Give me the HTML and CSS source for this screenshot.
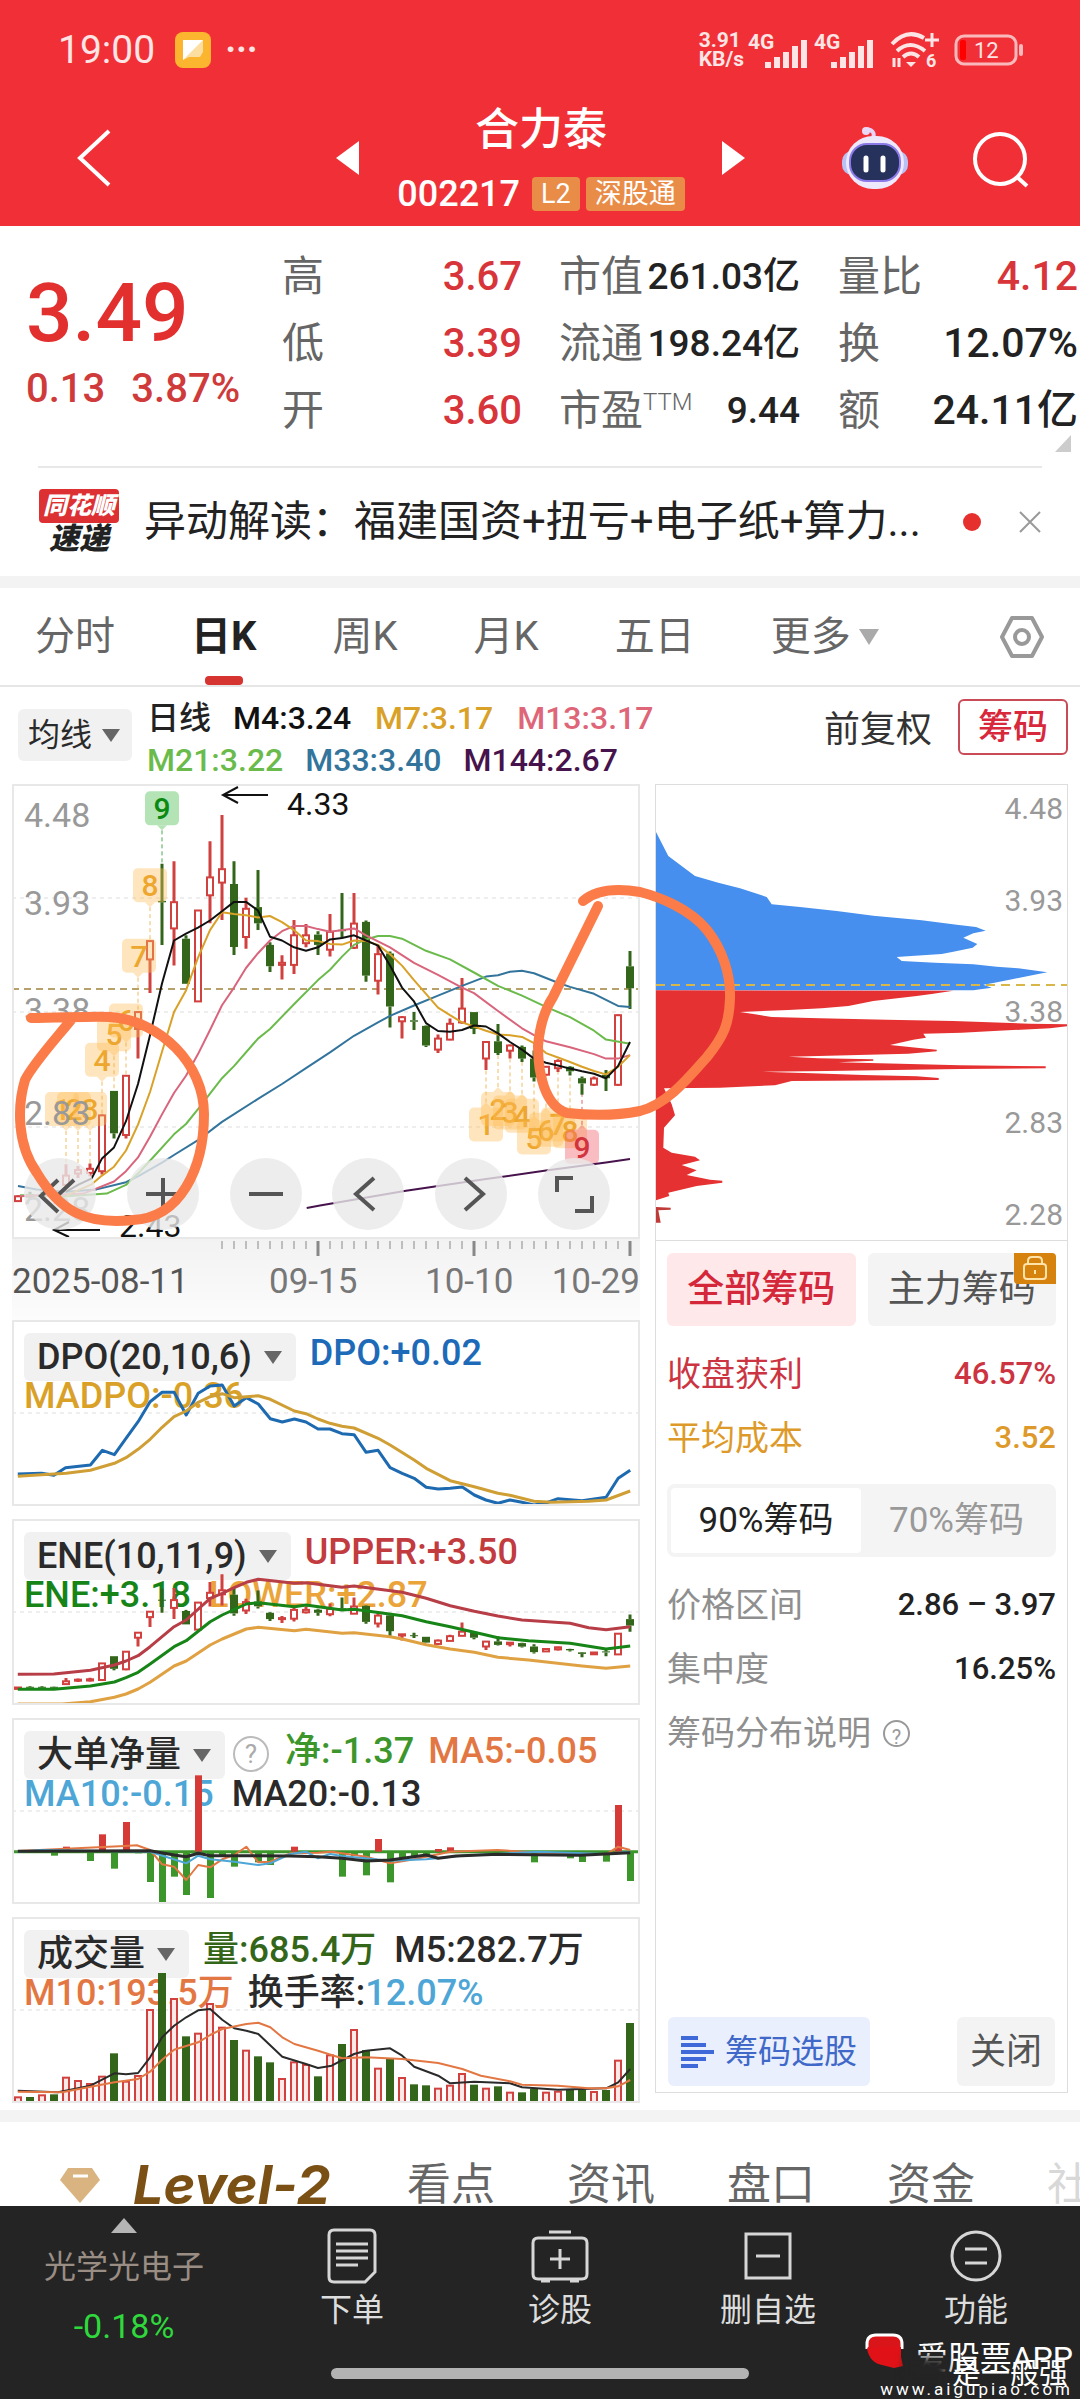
FILE: index.html
```html
<!DOCTYPE html>
<html lang="zh-CN">
<head>
<meta charset="utf-8">
<meta name="viewport" content="width=device-width">
<title>合力泰 002217</title>
<link rel="stylesheet" href="styles.css">
</head>
<body>
<header class="top">
  <div class="status">
    <span class="clock">19:00</span>
    <svg class="note" width="36" height="36" viewBox="0 0 36 36"><rect width="36" height="36" rx="8" fill="#fbb52f"/><path d="M8 8h20v12l-3 5H14L8 28z" fill="#fff" opacity=".55"/><path d="M8 8h20L8 28z" fill="#fff"/></svg>
    <span class="more">···</span>
    <span class="speed">3.91<br>KB/s</span>
    <svg width="62" height="36" viewBox="0 0 62 36" class="sig"><use href="#signal"/></svg>
    <svg width="62" height="36" viewBox="0 0 62 36" class="sig"><use href="#signal"/></svg>
    <svg class="wifi" width="50" height="38" viewBox="0 0 50 38" fill="none" stroke="#fde4e5" stroke-width="4"><path d="M2 13Q17-3 34 7M7 20q13-12 28 0M13 26q8-7 16 0"/><path d="M16 31h10l-5 5z" fill="#fde4e5" stroke="none"/><path d="M42 2v14M35 9h14M4 27v9M9 36v-9" stroke-width="3"/><text x="36" y="36" font-size="18" font-weight="700" fill="#fde4e5" stroke="none">6</text></svg>
    <svg width="72" height="32" viewBox="0 0 72 32"><rect x="2" y="2" width="60" height="28" rx="8" fill="none" stroke="#f9b9bc" stroke-width="3"/><rect x="6" y="6" width="6" height="20" rx="2" fill="#f00"/><path d="M67 12v8" stroke="#f9b9bc" stroke-width="4" stroke-linecap="round"/><text x="20" y="24" font-size="22" fill="#fde4e5">12</text></svg>
  </div>
  <nav class="titlebar">
    <button class="icon-btn back" aria-label="返回"><svg width="36" height="60" viewBox="0 0 36 60" fill="none" stroke="#fff" stroke-width="4"><path d="M33 3 4 30l29 27"/></svg></button>
    <button class="icon-btn prev" aria-label="上一只"><svg width="24" height="34" viewBox="0 0 24 34"><path d="M0 17 23 0v34z" fill="#fff"/></svg></button>
    <div class="name">
      <h1>合力泰</h1>
      <div class="code"><span>002217</span><b>L2</b><b>深股通</b></div>
    </div>
    <button class="icon-btn next" aria-label="下一只"><svg width="24" height="34" viewBox="0 0 24 34"><path d="M23 17 0 0v34z" fill="#fff"/></svg></button>
    <button class="icon-btn bot" aria-label="智能助手"><svg width="66" height="64" viewBox="0 0 66 64"><path d="M31 12q3-7-6-9" fill="none" stroke="#e6d4fa" stroke-width="4"/><circle cx="24" cy="5" r="4" fill="#e9d9f7"/><rect y="25" width="66" height="24" rx="10" fill="#b9c0f3"/><rect x="4" y="10" width="58" height="53" rx="27" fill="#eee8fd"/><rect x="8" y="18" width="50" height="37" rx="17" fill="#26315c" stroke="#8b79e8" stroke-width="2"/><path d="M24 32v12M41 32v12" stroke="#fff" stroke-width="5" stroke-linecap="round"/></svg></button>
    <button class="icon-btn search" aria-label="搜索"><svg width="58" height="58" viewBox="0 0 58 58" fill="none" stroke="#fff" stroke-width="4"><circle cx="28" cy="28" r="25"/><path d="m45 46 10 9"/></svg></button>
  </nav>
</header>

<section class="quote">
  <div class="last"><strong>3.49</strong><p><span>0.13</span><span>3.87%</span></p></div>
  <dl class="stat up"><div><dt>高</dt><dd>3.67</dd></div><div><dt>低</dt><dd>3.39</dd></div><div><dt>开</dt><dd>3.60</dd></div></dl>
  <dl class="stat cap"><div><dt>市值</dt><dd>261.03亿</dd></div><div><dt>流通</dt><dd>198.24亿</dd></div><div><dt>市盈<sup>TTM</sup></dt><dd>9.44</dd></div></dl>
  <dl class="stat turn"><div><dt>量比</dt><dd class="red">4.12</dd></div><div><dt>换</dt><dd>12.07%</dd></div><div><dt>额</dt><dd>24.11亿</dd></div></dl>
  <svg class="corner" width="16" height="17" viewBox="0 0 16 17"><path d="M16 0v17H0z" fill="#ccc"/></svg>
</section>
<section class="news">
  <div class="brand"><span>同花顺</span><em>速递</em></div>
  <a href="#news">异动解读：福建国资+扭亏+电子纸+算力...</a>
  <i class="dot"></i>
  <button class="icon-btn" aria-label="关闭提示"><svg width="24" height="24" viewBox="0 0 24 24" stroke="#999" stroke-width="2"><path d="m2 2 20 20M22 2 2 22"/></svg></button>
</section>

<nav class="periods">
  <button>分时</button><button class="on">日K</button><button>周K</button><button>月K</button><button>五日</button><button>更多<i class="caret light"></i></button>
  <button class="gear" aria-label="设置"><svg width="46" height="44" viewBox="0 0 46 44" fill="none" stroke="#999" stroke-width="4"><path d="M13 3h20l10 19-10 19H13L3 22z" stroke-linejoin="round"/><circle cx="23" cy="22" r="7"/></svg></button>
</nav>

<section class="averages">
  <button class="pick">均线<i class="caret"></i></button>
  <p><span>日线</span><span class="c-black">M4:3.24</span><span class="c-gold">M7:3.17</span><span class="c-pink">M13:3.17</span><br><span class="c-green">M21:3.22</span><span class="c-blue">M33:3.40</span><span class="c-purple">M144:2.67</span></p>
  <button class="adjust">前复权</button>
  <button class="chips-btn">筹码</button>
</section>

<main class="charts">
  <div class="left">
    <div class="kline">
      <svg id="kline" viewBox="0 0 628 455"></svg>
      <div class="tools">
        <button aria-label="最左"><svg viewBox="0 0 72 72"><path d="M34 22 17 38l17 16M50 22 33 38l17 16"/></svg></button>
        <button aria-label="放大"><svg viewBox="0 0 72 72"><path d="M36 20v33M19 36h34"/></svg></button>
        <button aria-label="缩小"><svg viewBox="0 0 72 72"><path d="M19 36h34"/></svg></button>
        <button aria-label="左移"><svg viewBox="0 0 72 72"><path d="M42 20 24 36l18 16"/></svg></button>
        <button aria-label="右移"><svg viewBox="0 0 72 72"><path d="m30 20 18 16-18 16"/></svg></button>
        <button aria-label="全屏"><svg viewBox="0 0 72 72"><path d="M19 34V20h16M54 38v15H37"/></svg></button>
      </div>
    </div>
    <div class="axis">
      <svg id="ticks" viewBox="0 0 628 18"></svg>
      <p><span>2025-08-11</span><span>09-15</span><span>10-10</span><span>10-29</span></p>
    </div>
    <div class="pane">
      <p class="legend"><button class="pick">DPO(20,10,6)<i class="caret"></i></button><span class="c-dpo">DPO:+0.02</span><br><span class="c-gold">MADPO:-0.36</span></p>
      <svg id="dpo" viewBox="0 0 628 186"></svg>
    </div>
    <div class="pane">
      <p class="legend"><button class="pick">ENE(10,11,9)<i class="caret"></i></button><span class="c-red">UPPER:+3.50</span><br><span class="c-ene">ENE:+3.18</span><span class="c-amber gap">LOWER:+2.87</span></p>
      <svg id="ene" viewBox="0 0 628 186"></svg>
    </div>
    <div class="pane">
      <p class="legend"><button class="pick">大单净量<i class="caret"></i></button><i class="help">?</i><span class="c-net">净:-1.37</span><span class="c-orange near">MA5:-0.05</span><br><span class="c-sky">MA10:-0.15</span><span class="gap">MA20:-0.13</span></p>
      <svg id="net" viewBox="0 0 628 186"></svg>
    </div>
    <div class="pane">
      <p class="legend"><button class="pick">成交量<i class="caret"></i></button><span class="c-vol">量:685.4万</span><span>M5:282.7万</span><br><span class="c-orange">M10:193.5万</span><span class="near">换手率:<span class="c-sky">12.07%</span></span></p>
      <svg id="vol" viewBox="0 0 628 186"></svg>
    </div>
  </div>

  <aside class="chips">
    <svg id="dist" viewBox="0 0 411 455"></svg>
    <div class="chips-body">
      <div class="pair"><button class="all">全部筹码</button><button class="main">主力筹码<svg class="lock" width="42" height="31" viewBox="0 0 42 31" fill="none" stroke="#ffe3a8" stroke-width="2"><path d="M0 0h38q4 0 4 4v27H4q-4 0-4-4z" fill="#d6820f" stroke="none"/><rect x="10" y="11" width="22" height="15" rx="3"/><path d="M14 11V8q0-4 4-4h6q4 0 4 4v3M21 17v4"/></svg></button></div>
      <dl>
        <div class="c-profit"><dt>收盘获利</dt><dd>46.57%</dd></div>
        <div class="c-cost"><dt>平均成本</dt><dd>3.52</dd></div>
      </dl>
      <div class="seg"><button class="on">90%筹码</button><button>70%筹码</button></div>
      <dl class="grey">
        <div><dt>价格区间</dt><dd>2.86 – 3.97</dd></div>
        <div><dt>集中度</dt><dd>16.25%</dd></div>
        <div><dt>筹码分布说明<i class="help small">?</i></dt></div>
      </dl>
    </div>
    <div class="chips-foot">
      <button class="screen"><svg width="34" height="34" viewBox="0 0 34 34" stroke="#3f68d8" stroke-width="4"><path d="M0 3h17M0 10h25M0 17h33M0 24h25M0 31h17"/></svg>筹码选股</button>
      <button class="close">关闭</button>
    </div>
  </aside>

  <svg class="ink" viewBox="0 0 1080 455" fill="none" stroke="#fb7c48" stroke-width="10" stroke-linecap="round" stroke-linejoin="round">
    <path d="M31 234C60 234 90 232 110 233C160 236 204 280 204 330C204 385 180 434 133 436C85 441 60 427 37 389C17 361 17 323 25 296C33 280 53 258 71 236"/>
    <path d="M583 117C598 104 622 105 640 108C660 113 690 125 707 146C722 165 731 190 730 215C729 240 724 252 707 273C690 292 668 320 640 327C610 333 585 331 567 329C545 322 538 290 538 262C540 240 545 225 553 213L598 122"/>
  </svg>
</main>

<nav class="topics">
  <svg width="42" height="37" viewBox="0 0 42 37"><path d="M9 1h24l8 12-20 23L1 13z" fill="#d9b480"/><path d="M14 9h15" stroke="#fff" stroke-width="3"/></svg>
  <a class="level" href="#level2">Level-2</a><a href="#views">看点</a><a href="#info">资讯</a><a href="#book">盘口</a><a href="#funds">资金</a><a class="fade" href="#community">社区</a>
</nav>

<footer class="dock">
  <button class="index"><svg width="26" height="15" viewBox="0 0 26 15"><path d="M13 0 26 15H0z" fill="#b5b5b5"/></svg><span>光学光电子</span><b>-0.18%</b></button>
  <button><svg width="50" height="56" viewBox="0 0 50 56"><path d="M7 2h36q5 0 5 5v37L38 54H7q-5 0-5-5V7q0-5 5-5zM9 16h32M9 23h32M9 30h32M9 37h22"/></svg>下单</button>
  <button><svg width="58" height="56" viewBox="0 0 58 56"><path d="M18 4h22M7 10h44q5 0 5 5v31q0 5-5 5H7q-5 0-5-5V15q0-5 5-5zM29 21v20M19 31h20M10 53h9M39 53h9"/></svg>诊股</button>
  <button><svg width="50" height="56" viewBox="0 0 50 56"><path d="M3 6h44v44H3zM13 28h24"/></svg>删自选</button>
  <button><svg width="54" height="56" viewBox="0 0 54 56"><circle cx="27" cy="28" r="24"/><path d="M16 21h22M16 35h22"/></svg>功能</button>
  <i class="home"></i>
  <div class="mark">
    <svg width="40" height="38" viewBox="0 0 40 38"><path d="M2 16V11Q2 2 11 2h17q9 0 9 9v5" fill="#d9151a" stroke="#fff" stroke-width="3"/><path d="M3 14h33v10l2 9-9 2-12-3q-12-2-15-16z" fill="#e01217"/></svg>
    <span class="app">爱股票APP</span><i class="smudge"></i><span class="who">是一般强</span><span class="site">www.aigupiao.com</span>
  </div>
</footer>

<svg width="0" height="0" class="defs"><defs><g id="signal"><text x="0" y="17" font-size="21" font-weight="700" fill="#fde4e5">4G</text><path d="M20 36v-6M29 36V25M38 36V20M47 36V14M56 36V8" stroke="#fde4e5" stroke-width="6"/></g></defs></svg>
<script src="charts.js"></script>
</body>
</html>
```

FILE: styles.css
```css
* { box-sizing: border-box; }
body {
  margin: 0;
  background: #fff;
  color: #222;
  font-family: Roboto, "Noto Sans CJK SC", sans-serif;
  font-size: 36px;
  overflow-x: hidden;
}
h1, p, dl, dd { margin: 0; }
button {
  border: 0; padding: 0; background: none; color: inherit;
  font: inherit; line-height: 1; white-space: nowrap;
}
a { color: inherit; text-decoration: none; }
svg { display: block; flex: none; }
svg text { font-family: Roboto, "Noto Sans CJK SC", sans-serif; }
.defs { position: absolute; }
.icon-btn { display: grid; place-items: center; }

/* header */
.top { background: #f03036; color: #fff; height: 226px; padding: 28px 0 0; }
.status { display: flex; align-items: center; height: 44px; padding: 0 54px 0 58px; color: #fde4e5; gap: 4px; }
.clock { font-size: 39px; }
.note { margin-left: 16px; }
.more { margin-left: 10px; font-size: 36px; font-weight: 700; margin-right: auto; }
.speed { font-size: 21px; line-height: 19px; font-weight: 700; }
.wifi { margin: 0 10px; }
.titlebar {
  display: grid; align-items: center; height: 150px;
  grid-template-columns: 112px 224fr 24px 362px 24px 96fr 66px 64px 58px 50px;
}
.back { justify-self: end; padding-top: 22px; }
.prev, .next { padding-top: 22px; }
.prev { grid-column: 3; }
.bot { grid-column: 7; padding-top: 22px; }
.search { grid-column: 9; padding-top: 26px; }
.name { text-align: center; align-self: start; padding-top: 28px; }
.name h1 { font-size: 44px; line-height: 60px; font-weight: 500; }
.code { display: flex; justify-content: center; align-items: center; gap: 6px; font-size: 36px; line-height: 56px; padding-top: 6px; }
.code span { margin-right: 6px; font-weight: 500; }
.code b { background: #e98c48; border-radius: 4px; font-size: 27px; line-height: 34px; padding: 0 9px; font-weight: 400; }

/* quote */
.quote {
  position: relative; display: grid; height: 240px; padding: 17px 2px 0 26px;
  grid-template-columns: 256px 240px 37px 241px 38px 1fr;
}
.last { color: #e2302f; }
.last strong { display: block; font-size: 82px; line-height: 92px; padding-top: 24px; font-weight: 500; }
.last p { display: flex; gap: 26px; font-size: 40px; line-height: 52px; padding-top: 4px; font-weight: 500; color: #cf3b3b; }
.stat { font-size: 40px; line-height: 67px; white-space: nowrap; }
.stat div { display: flex; justify-content: space-between; height: 67px; }
.stat dt { color: #666; font-size: 42px; }
.stat dd { font-weight: 500; }
.stat.up dd, .turn .red { color: #d8353a; }
.cap { grid-column: 4; }
.cap dd { font-size: 37px; }
.turn { grid-column: 6; }
.turn dd { font-size: 41px; }
.stat sup { font-size: 24px; line-height: 24px; font-weight: 300; }
.corner { position: absolute; right: 9px; bottom: 14px; }
.news {
  display: flex; align-items: center; height: 110px; margin: 0 38px;
  border-top: 2px solid #e8e8e8;
}
.brand { display: flex; flex-direction: column; width: 82px; align-items: center; font-style: italic; }
.brand span { background: #dc3033; color: #fff; font-size: 24px; line-height: 34px; font-weight: 900; padding: 0 4px; border-radius: 4px; width: 80px; white-space: nowrap; text-align: center; }
.brand em { font-size: 30px; line-height: 32px; font-weight: 900; }
.news a { flex: 1; margin-left: 24px; font-size: 42px; line-height: 60px; white-space: nowrap; overflow: hidden; }
.dot { width: 18px; height: 18px; border-radius: 50%; background: #e6302e; margin: 0 37px 0 20px; }

/* period tabs */
.periods {
  display: flex; align-items: center; height: 111px; padding: 0 35px;
  border-top: 12px solid #f3f3f3; border-bottom: 2px solid #e6e6e6; color: #666; font-size: 40px; gap: 76px;
}
.periods button { position: relative; height: 97px; display: flex; align-items: center; }
.periods .on { color: #222; font-weight: 700; }
.periods .on::after { content: ""; position: absolute; left: 50%; bottom: 0; width: 38px; height: 9px; margin-left: -19px; border-radius: 4px; background: #d63431; }
.periods .gear { margin-left: auto; }
.caret { width: 0; height: 0; border: 9px solid transparent; border-top: 13px solid #666; border-bottom: 0; margin-left: 12px; }
.caret.light { border-top-color: #aaa; border-left-width: 10px; border-right-width: 10px; border-top-width: 16px; margin-left: 8px; }
.pick { display: inline-flex; align-items: center; background: #f1f1f1; border-radius: 6px; color: #2a2a2a; }

/* moving averages */
.averages { display: flex; align-items: flex-start; height: 97px; padding: 12px 12px 0 18px; font-size: 32px; }
.averages .pick { height: 52px; width: 114px; padding-left: 10px; margin-top: 10px; flex: none; }
.averages .caret { margin-left: 10px; }
.averages p { flex: 1; margin-left: 15px; margin-top: -2px; line-height: 42px; white-space: nowrap; font-weight: 500; }
.averages p span { margin-right: 22px; }
.averages .c-black, .averages .c-gold { margin-right: 24px; }
.adjust { font-size: 36px; line-height: 62px; margin-right: 26px; color: #333; }
.chips-btn { width: 110px; height: 56px; border: 2px solid #c94b57; border-radius: 6px; color: #d8283c; font-weight: 500; font-size: 35px; }
.c-black { color: #111; } .c-gold { color: #d9a128; } .c-pink { color: #de6678; }
.c-green { color: #6bbb4c; } .c-blue { color: #33749c; } .c-purple { color: #47134c; }
.c-dpo { color: #1d6ab8; } .c-red { color: #c23b3f; } .c-ene { color: #178417; }
.c-amber { color: #eaa43a; } .c-net { color: #3c962b; } .c-orange { color: #e37743; }
.c-sky { color: #4da6d6; } .c-vol { color: #336619; }

/* chart columns */
.charts { position: relative; display: grid; grid-template-columns: 628fr 413fr; gap: 15px; padding: 0 12px 7px; align-items: start; }
.ink { position: absolute; top: 0; left: 0; width: 100%; pointer-events: none; }
.kline { position: relative; }
.kline, .pane { outline: 2px solid #e8e8e8; outline-offset: -2px; }
.kline > svg, .axis svg, .pane > svg { width: 100%; }
.tools { position: absolute; left: 12px; right: 30px; bottom: 9px; display: flex; justify-content: space-between; }
.tools button { width: 72px; height: 72px; border-radius: 50%; background: rgba(232, 232, 232, .8); }
.tools path { fill: none; stroke: #555; stroke-width: 4; }
.axis { height: 81px; background: linear-gradient(#f2f2f2, #fcfcfc); color: #777; font-size: 35px; }
.axis p { display: grid; grid-template-columns: 257px 156px 115px 1fr; line-height: 50px; white-space: nowrap; }
.axis p span:first-child { color: #555; }
.axis p span:last-child { text-align: right; }
.pane { display: grid; height: 186px; margin-bottom: 13px; overflow: hidden; }
.pane:last-child { margin-bottom: 0; }
.pane > * { grid-area: 1 / 1; }
.pane > svg { pointer-events: none; }
.legend { padding: 13px 0 0 12px; font-size: 36px; line-height: 36px; white-space: nowrap; font-weight: 500; color: #2a2a2a; }
.legend .pick { height: 48px; padding: 0 14px 0 13px; margin-right: 14px; margin-bottom: -3px; font-weight: 500; vertical-align: middle; }
.legend > span + span { margin-left: 18px; }
.legend > span + .near { margin-left: 14px; }
.legend br + span { margin-left: 0; }
.help {
  display: inline-grid; place-items: center; width: 36px; height: 36px; margin: 0 16px 0 -6px; vertical-align: middle;
  border: 2px solid #bbb; border-radius: 50%; color: #aaa; font-size: 26px; line-height: 30px; font-style: normal; font-weight: 400;
}
.help.small { width: 27px; height: 27px; margin: -6px 0 0 12px; font-size: 20px; border-color: #999; color: #999; }

/* chip distribution */
.chips { border: 1px solid #ddd; height: 1309px; display: flex; flex-direction: column; }
.chips > svg { width: 100%; border-bottom: 1px solid #ddd; }
.chips-body { padding: 12px 11px 0; font-size: 34px; }
.pair { display: grid; grid-template-columns: 1fr 1fr; gap: 12px; }
.pair button { height: 73px; border-radius: 6px; font-size: 37px; position: relative; }
.pair .all { background: #fee8ea; color: #d4283a; font-weight: 500; }
.pair .main { background: #f4f4f4; color: #555; }
.lock { position: absolute; top: 0; right: 0; }
.chips dl { padding-top: 16px; }
.chips dl div { display: flex; justify-content: space-between; line-height: 64px; }
.chips dd { font-size: 31px; font-weight: 500; }
.c-profit { color: #cc3442; } .c-cost { color: #dd9a2a; }
.grey dt { color: #8f8f8f; }
.seg { display: grid; grid-template-columns: 190px 1fr; height: 73px; margin-top: 14px; padding: 4px; background: #f4f4f4; border-radius: 8px; color: #999; }
.seg button { font-size: 35px; border-radius: 4px; }
.seg .on { background: #fff; color: #222; }
.chips-foot { display: flex; justify-content: space-between; margin-top: auto; padding: 0 12px 6px; }
.chips-foot button { height: 69px; border-radius: 6px; display: flex; align-items: center; justify-content: center; }
.chips-foot .screen { width: 202px; background: #e9effc; color: #3f68c8; font-size: 33px; gap: 10px; }
.chips-foot .close { width: 98px; background: #f3f3f3; color: #555; font-size: 36px; }

/* topic tabs */
.topics {
  display: flex; align-items: center; height: 96px; padding: 42px 0 0 59px; border-top: 12px solid #f3f3f3;
  color: #666; font-size: 44px; line-height: 46px; white-space: nowrap; overflow: hidden; gap: 72px;
}
.topics a { flex: none; }
.topics .level { font: italic 700 54px/46px Inter, sans-serif; color: #7a5015; margin-left: -40px; width: 202px; }
.topics .fade { color: #d8d8d8; }

/* bottom bar */
.dock { position: relative; display: grid; grid-template-columns: 248fr 208fr 208fr 208fr 208fr; height: 193px; background: #242424; color: #ddd; font-size: 32px; overflow: hidden; }
.dock button { display: flex; flex-direction: column; align-items: center; padding-top: 22px; gap: 10px; height: 150px; }
.dock button svg { fill: none; stroke: #d6d6d6; stroke-width: 3; }
.dock .index { padding-top: 12px; gap: 18px; }
.dock .index svg { stroke: none; }
.index span { color: #9a8d84; }
.index b { color: #2fd83c; font-weight: 400; font-size: 34px; padding-top: 8px; }
.home { position: absolute; left: 331px; bottom: 20px; width: 418px; height: 11px; border-radius: 6px; background: #b3b3b3; }
.mark { position: absolute; right: 7px; bottom: 0; width: 208px; height: 66px; color: #fff; font-size: 32px; line-height: 34px; }
.mark span { position: absolute; white-space: nowrap; right: 0; }
.mark .app { top: 8px; }
.smudge { position: absolute; left: 40px; top: 24px; width: 42px; height: 26px; background: #242424; filter: blur(4px); }
.mark .who { top: 24px; right: 5px; font-size: 29px; }
.mark .site { bottom: 0; font-size: 17px; line-height: 20px; letter-spacing: 3px; }
```

FILE: charts.js
```js
const RED = '#d0413f', GREEN = '#33661a';
const put = (id, s) => { document.getElementById(id).innerHTML = s; };
const slot = i => 6 + 12 * i;
const line = (pts, color, fx, fy, w = 2) => {
  let d = '';
  for (let i = 0; i < pts.length; i += 2) d += fx(pts[i]).toFixed(1) + ',' + fy(pts[i + 1]).toFixed(1) + ' ';
  return `<polyline points="${d}" fill="none" stroke="${color}" stroke-width="${w}" stroke-linejoin="round"/>`;
};
const dash = (y, w, color = '#ddd', width = 1, gap = '4 4') =>
  `<path d="M0 ${y}H${w}" stroke="${color}" stroke-width="${width}" stroke-dasharray="${gap}"/>`;

// day candles: direction, high, body top, body bottom, low
const days = [
  'r',1235,1238,1252,1252,'g',1225,1232,1242,1245,'g',1225,1232,1240,1244,'g',1228,1232,1240,1244,
  'r',1145,1178,1205,1208,'r',1150,1162,1172,1185,'r',1143,1158,1170,1180,'r',1000,1003,1165,1175,
  'g',932,932,1055,1070,'r',886,888,1060,1070,'r',700,703,752,838,'r',495,497,550,648,
  'g',272,380,384,508,'r',265,384,460,568,'g',480,490,621,621,'r',407,408,672,674,
  'r',207,312,364,445,'r',131,288,327,436,'g',265,331,514,537,'r',371,403,485,519,
  'g',290,398,445,465,'g',500,508,570,587,'r',538,560,566,608,'r',436,480,566,592,
  'r',447,480,503,515,'g',468,478,508,537,'r',418,470,522,542,'g',357,464,468,488,
  'r',357,446,516,520,'g',437,441,597,615,'r',510,535,612,652,'g',527,533,687,748,
  'r',714,718,730,780,'g',703,727,731,755,'g',742,743,800,804,'r',768,780,812,822,
  'r',722,737,783,785,'r',604,693,733,737,'g',703,703,752,767,'r',788,790,838,871,
  'g',738,788,822,828,'r',797,800,815,838,'g',800,804,838,848,'g',815,838,893,905,
  'r',860,862,885,887,'r',840,845,866,877,'g',860,862,875,887,'g',890,895,910,943,
  'r',890,896,914,918,'g',871,885,895,932,'r',710,712,914,918,'g',526,570,634,694];
const candles = fy => {
  let s = '';
  for (let i = 0; i < days.length; i += 5) {
    const x = slot(i / 5), [dir, h, t, b, l] = days.slice(i, i + 5);
    const [H, T, B, L] = [h, t, b, l].map(fy);
    const up = dir === 'r', c = up ? RED : GREEN, bh = Math.max(B - T, 1);
    s += `<path d="M${x} ${H.toFixed(1)}V${T.toFixed(1)}M${x} ${B.toFixed(1)}V${L.toFixed(1)}" stroke="${c}" stroke-width="3"/>`;
    s += up
      ? `<rect x="${x - 3}" y="${T.toFixed(1)}" width="6" height="${bh.toFixed(1)}" fill="#fff" stroke="${c}" stroke-width="2"/>`
      : `<rect x="${x - 4}" y="${T.toFixed(1)}" width="8" height="${bh.toFixed(1)}" fill="${c}"/>`;
  }
  return s;
};

// main price chart
const kx = x => x / 3 - 12, ky = y => y / 2.904 - 14;
const m4 = [198,1225,234,1205,275,1186,306,1128,342,1096,378,1020,414,912,450,770,486,620,522,495,558,475,594,458,630,437,666,410,702,383,738,383,774,408,810,484,846,495,882,515,918,525,954,515,990,492,1026,488,1062,480,1098,495,1134,510,1170,568,1206,632,1242,672,1278,735,1314,758,1350,760,1386,755,1422,742,1458,745,1494,765,1530,790,1566,812,1602,838,1638,850,1674,858,1710,867,1746,875,1782,882,1818,895,1854,860,1890,790];
const m7 = [200,1235,275,1203,306,1178,342,1152,378,1105,414,1030,450,935,486,818,522,703,558,640,594,545,630,465,666,413,702,418,738,422,774,428,810,424,846,442,882,465,918,495,954,497,990,505,1026,507,1062,495,1098,497,1134,508,1170,535,1206,568,1242,610,1278,650,1314,690,1350,712,1386,733,1422,745,1458,757,1494,768,1530,770,1566,775,1602,793,1638,822,1674,835,1710,848,1746,862,1782,874,1818,884,1854,862,1890,828];
const m13 = [60,1238,250,1230,290,1215,342,1195,378,1165,414,1125,450,1065,486,1000,522,938,558,888,594,825,630,755,666,683,702,632,738,575,774,532,810,495,846,468,882,453,918,453,954,462,990,470,1062,460,1098,480,1170,515,1242,560,1314,595,1386,632,1422,648,1494,700,1566,750,1602,770,1638,788,1710,805,1782,825,1818,838,1854,838,1890,828];
const m21 = [60,1235,200,1238,320,1230,378,1205,414,1172,450,1135,522,1058,558,1028,594,985,666,895,702,860,774,780,810,752,882,680,954,610,990,580,1026,542,1062,508,1098,492,1134,482,1170,482,1206,490,1278,525,1350,550,1422,588,1494,627,1566,655,1638,688,1710,718,1782,757,1818,783,1890,795];
const m33 = [54,1208,110,1218,200,1225,290,1218,378,1197,414,1180,486,1140,522,1118,594,1075,666,1022,774,955,846,912,918,866,990,820,1062,772,1134,733,1170,714,1242,684,1314,655,1386,627,1458,600,1494,596,1530,586,1566,583,1602,590,1638,604,1674,618,1710,630,1782,650,1854,685,1890,688];
const m144 = [920,1272,960,1265,1218,1222,1458,1188,1638,1163,1818,1140,1890,1130];

// nine-turn markers: label, slot, box centre x, box top, dash end
const turns = [['1',4,50,935,1145],['2',5,62,935,1150],['3',6,78,935,1143],['4',7,90,792,1000],['5',8,102,718,932],['6',9,114,678,886],['7',10,127,490,700],['8',11,138,285,495],
  ['1',39,0,980,871],['2',40,0,935,828],['3',41,0,945,838],['4',42,0,955,848],['5',43,0,1018,905],['6',44,0,995,887],['7',45,0,980,877],['8',46,0,1000,887]];
const badge = (n, x, cx, top, end, fill, ink) => {
  const y = ky(top), e = ky(end), below = end < top;
  const tip = below ? `M${x - 5} ${y}l5 -5 5 5z` : `M${x - 5} ${y + 34}l5 5 5 -5z`;
  return `<path d="M${x} ${below ? y - 5 : y + 39}V${e}" stroke="${ink}" opacity=".75" stroke-dasharray="4 3"/>` +
    `<rect x="${cx - 17}" y="${y}" width="34" height="34" rx="5" fill="${fill}"/><path d="${tip}" fill="${fill}"/>` +
    `<text x="${cx}" y="${y + 28}" font-size="30" font-weight="500" text-anchor="middle" fill="${ink}">${n}</text>`;
};
const label = (t, x, y, size, c, a = 'start') => `<text x="${x}" y="${y}" font-size="${size}" fill="${c}" text-anchor="${a}">${t}</text>`;

let k = [114, 228, 343].map(y => dash(y, 628)).join('') + dash(205, 628, '#b5a169', 2, '7 5');
k += candles(ky);
for (const [n, i, cx, top, end] of turns) k += badge(n, slot(i), cx || slot(i), top, end, 'rgba(255,190,90,.4)', '#eda62e');
k += badge('9', 150, 150, 62, 272, '#b4e3b6', '#0b8a12') + badge('9', 570, 570, 1045, 943, 'rgba(240,90,100,.4)', '#d2333c');
[['4.48', 43], ['3.93', 131], ['3.38', 238], ['2.83', 341], ['2.28', 437]].forEach(([t, y]) => { k += label(t, 12, y, 34, '#999'); });
k += line(m33, '#33749c', kx, ky) + line(m21, '#6bbb4c', kx, ky) + line(m13, '#d9657c', kx, ky) + line(m7, '#d9a128', kx, ky) + line(m4, '#111', kx, ky) + line(m144, '#47134c', kx, ky);
k += '<path d="M256 11h-45m15-8-15 8 15 8M88 446H42m15-8-15 8 15 7" fill="none" stroke="#111" stroke-width="2"/>';
k += label('4.33', 275, 31, 32, '#111') + label('2.43', 107, 453, 32, '#111');
put('kline', k);

let t = '';
for (let i = 17; i < 52; i++) {
  const big = [25, 38, 51].includes(i);
  t += `<path d="M${slot(i)} 2V${big ? 17 : 10}" stroke="#888" stroke-width="${big ? 3 : 1}"/>`;
}
put('ticks', t);

// indicator panes
const px = x => x / 2.412 - 12;
const dy = y => y / 3 - 20;
put('dpo', dash(93, 628) +
  line([43,522,100,520,130,526,158,503,218,495,247,451,276,464,304,415,333,365,362,305,391,277,420,277,449,345,478,280,507,258,536,255,565,318,594,293,623,312,652,356,681,366,710,357,738,366,767,387,796,387,825,401,854,404,883,457,912,451,941,503,970,520,999,535,1028,562,1057,567,1086,565,1115,561,1144,585,1172,600,1201,610,1230,600,1259,607,1288,615,1317,609,1346,596,1404,602,1462,592,1491,535,1520,511], '#1d6ab0', px, dy, 3) +
  line([43,529,100,524,160,520,218,511,276,490,304,473,333,448,362,418,391,382,420,350,449,333,478,307,507,290,536,281,565,293,594,290,623,287,652,298,710,333,738,341,767,357,796,370,825,379,854,384,912,415,941,435,999,480,1028,505,1086,542,1144,560,1201,580,1230,586,1288,604,1330,607,1420,604,1462,600,1520,573], '#cf9f35', px, dy, 3));

const ey = y => y / 3 - 219;
put('ene', dash(93, 628) + candles(v => ky(v) * .297 + 46) +
  line([43,1123,130,1122,218,1111,276,1095,304,1083,333,1067,362,1040,420,980,449,960,507,895,536,880,565,863,594,847,623,838,710,850,738,848,825,862,854,858,970,877,1028,895,1086,917,1144,934,1201,948,1259,960,1330,966,1375,970,1420,983,1462,989,1520,980], '#b73d46', px, ey, 3) +
  line([43,1168,130,1168,218,1158,276,1146,304,1133,333,1117,362,1092,420,1040,449,1022,507,965,536,945,594,912,623,908,710,920,738,915,825,930,854,928,970,947,1028,965,1086,980,1144,997,1201,1013,1275,1022,1375,1030,1462,1047,1520,1038], '#178417', px, ey, 3) +
  line([43,1212,150,1212,218,1205,276,1192,304,1182,333,1167,362,1147,420,1098,449,1083,507,1035,536,1017,594,987,623,982,710,992,738,988,825,1000,854,998,941,1010,970,1017,1028,1034,1086,1047,1144,1057,1201,1072,1275,1080,1404,1098,1462,1105,1520,1098], '#dfa142', px, ey, 3));

const ny = y => y / 3 - 18;
const net = { 3:467,4:440,6:483,7:403,8:506,9:366,10:460,11:546,12:611,13:530,14:585,15:226,16:594,17:470,18:500,20:487,21:495,23:440,27:530,28:468,29:526,30:417,31:547,32:475,33:468,34:465,35:447,36:442,43:487,46:475,47:486,49:485,50:315,51:543 };
let n = dash(93, 628) + `<path d="M0 ${ny(455)}H628" stroke="#3c962b" stroke-width="3"/>`;
for (const i in net) {
  const v = ny(net[i]), z = ny(455);
  n += `<rect x="${slot(+i) - 3}" y="${Math.min(v, z)}" width="7" height="${Math.abs(v - z)}" fill="${v < z ? '#d63a36' : '#3c962b'}"/>`;
}
n += line([43,453,300,438,330,436,362,450,391,493,420,500,449,540,478,495,507,502,536,478,565,465,594,440,623,487,652,485,700,460,767,458,800,455,883,470,941,490,999,478,1086,455,1200,450,1300,458,1462,463,1491,440,1520,450], '#e37743', px, ny) +
  line([43,455,100,450,362,455,400,470,449,490,478,467,507,478,565,485,623,495,652,490,700,462,738,455,767,475,796,462,825,468,941,482,1028,478,1115,467,1300,455,1460,462,1520,455], '#4da6d6', px, ny) +
  line([43,454,362,452,420,465,449,470,478,460,507,467,700,468,767,470,825,475,883,483,941,480,1028,465,1057,475,1100,468,1200,463,1400,466,1520,458], '#2a2a2a', px, ny, 3);
put('net', n);

const vy = y => y / 3 - 218;
const vol = [1192,1194,1186,1186,1133,1143,1152,1130,1063,1145,1128,930,822,897,1012,1001,912,983,1023,1052,1072,1090,1137,1087,1095,1132,1066,1035,990,1053,1106,1080,1134,1156,1159,1166,1157,1122,1157,1166,1162,1178,1180,1170,1178,1175,1172,1172,1176,1173,1082,972];
const volDown = [1,3,8,12,14,18,20,21,25,27,29,31,33,34,38,40,42,43,46,47,49,51];
let v = dash(93, 628);
vol.forEach((h, i) => {
  const y = vy(h), b = 186 - y, x = slot(i);
  v += volDown.includes(i)
    ? `<rect x="${x - 4}" y="${y}" width="8" height="${b}" fill="${GREEN}"/>`
    : `<rect x="${x - 3}" y="${y + 1}" width="6" height="${b - 2}" fill="#fde9e8" stroke="${RED}" stroke-width="2"/>`;
});
v += line([43,1175,140,1180,218,1160,276,1123,304,1126,333,1122,362,1075,391,1015,420,980,449,955,478,934,507,930,536,962,565,988,594,995,623,1005,681,1073,738,1095,767,1107,800,1100,854,1065,883,1055,941,1048,970,1070,999,1103,1057,1130,1086,1153,1144,1148,1230,1153,1259,1165,1346,1172,1462,1168,1491,1150,1520,1110], '#2a2a2a', px, vy) +
  line([43,1178,150,1180,200,1168,276,1150,333,1140,362,1118,391,1082,420,1052,478,1030,507,1008,536,990,594,975,623,971,652,985,681,1015,710,1035,767,1055,825,1078,883,1075,970,1080,1057,1092,1115,1110,1160,1130,1230,1147,1259,1157,1346,1160,1420,1168,1462,1168,1491,1162,1520,1143], '#e37743', px, vy);
put('vol', v);

// chip distribution by price
const area = (pts, c) => {
  let d = '';
  for (let i = 0; i < pts.length; i += 2) d += ((pts[i] - 48) / 3).toFixed(1) + ',' + (pts[i + 1] / 3 - 14).toFixed(1) + ' ';
  return `<polygon points="${d}" fill="${c}"/>`;
};
put('dist',
  area([48,183,85,255,165,315,235,335,300,352,380,378,395,400,480,408,590,420,700,434,845,448,950,461,1008,468,1037,479,1000,487,970,500,1012,519,998,530,940,542,905,549,825,554,770,558,785,570,885,575,1000,580,1070,587,1135,592,1222,604,1180,612,1120,624,1060,636,1030,641,1055,650,1000,658,48,658], '#468fee') +
  area([48,658,940,659,880,668,830,675,700,690,625,705,545,712,445,717,300,723,345,730,395,738,540,742,740,746,940,750,1170,758,1282,760,1282,766,1230,772,1075,779,965,785,850,788,858,800,820,806,750,822,830,830,890,836,890,841,805,848,625,853,445,857,535,862,700,865,700,869,595,874,780,878,960,883,1217,886,1217,892,960,894,560,900,358,902,515,907,670,912,830,916,896,921,896,927,455,930,405,943,240,950,72,952,95,1000,105,1033,72,1070,70,1130,95,1145,165,1157,180,1168,125,1182,170,1198,140,1212,210,1226,247,1229,247,1235,170,1245,85,1265,88,1275,48,1288], '#e53131') +
  area([48,1308,92,1310,92,1316,55,1318,62,1355,48,1355], '#c03a38') +
  dash(200, 411, '#d9b648', 2, '9 6') +
  [['4.48', 34], ['3.93', 126], ['3.38', 237], ['2.83', 348], ['2.28', 440]].map(([s, y]) => label(s, 407, y, 30, '#999', 'end')).join(''));
```
